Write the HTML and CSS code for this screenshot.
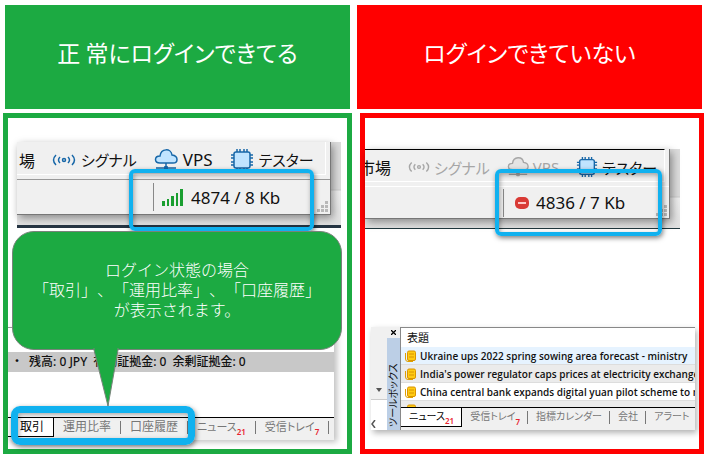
FILE: index.html
```html
<!DOCTYPE html>
<html lang="ja">
<head>
  <meta charset="UTF-8">
  <meta name="viewport" content="width=device-width, initial-scale=1.0">
  <title>ログイン状態の確認</title>
  <link rel="stylesheet" href="styles.css">
</head>
<body>
  <svg class="defs" aria-hidden="true">
    <symbol id="signal" viewBox="0 0 24 16">
      <path d="M4 3 Q-1 8 4 13 M8 5 Q5 8 8 11 M20 3 Q25 8 20 13 M16 5 Q19 8 16 11" fill="none" stroke="currentColor" stroke-width="1.500"/>
      <circle cx="12" cy="8" r="1.500" fill="none" stroke="currentColor" stroke-width="1.500"/>
    </symbol>
    <symbol id="cloud" viewBox="0 0 24 22">
      <path d="M6 14 C0 14 0 7 6 7 C7 -1 17 -1 18 6 C25 7 24 14 19 14 Z" fill="var(--fill)" stroke="currentColor" stroke-width="1.500"/>
      <path d="M12 14 V18 M2 19 H22" stroke="currentColor" stroke-width="1.500"/>
      <rect x="10" y="17" width="4" height="4" rx="1" fill="currentColor"/>
    </symbol>
    <symbol id="chip" viewBox="0 0 24 22">
      <path d="M7 0 V22 M10 0 V22 M14 0 V22 M17 0 V22 M1 6 H23 M1 9 H23 M1 13 H23 M1 16 H23" stroke="currentColor" stroke-width="1.500"/>
      <rect x="4" y="3" width="16" height="16" rx="2" fill="var(--fill)" stroke="currentColor" stroke-width="1.500"/>
    </symbol>
    <symbol id="news" viewBox="0 0 12 12">
      <path d="M1.500 3 V9 Q1.500 11.500 4 11.500 H9" fill="none" stroke="#e0a000"/>
      <rect x="3.500" y="1" width="8" height="9.500" rx="1.500" fill="#ffcb12" stroke="#d99400"/>
      <path d="M5 4 H10 M5 7 H10" stroke="#d99400"/>
    </symbol>
    <symbol id="grip" viewBox="0 0 12 12">
      <path d="M8 0h3v3h-3z M4 4h3v3h-3z M8 4h3v3h-3z M0 8h3v3h-3z M4 8h3v3h-3z M8 8h3v3h-3z" fill="#b8b8b8"/>
    </symbol>
  </svg>

  <main class="compare">
    <section class="column ok">
      <h1>正 常にログインできてる</h1>
      <div class="panel">
        <div class="shot">
          <div class="window">
            <div class="toolbar">
              <span class="market">場</span>
              <span class="tool"><svg class="icon"><use href="#signal"/></svg>シグナル</span>
              <span class="tool"><svg class="icon"><use href="#cloud"/></svg><span class="latin">VPS</span></span>
              <span class="tool"><svg class="icon"><use href="#chip"/></svg>テスター</span>
            </div>
            <div class="status">
              <div class="traffic">
                <svg class="i-bars" viewBox="0 0 22 18"><path d="M0 13h3v5h-3z M5 11h2v7h-2z M9 8h3v10h-3z M14 5h2v13h-2z M18 1h3v17h-3z" fill="#1a9e30"/></svg>
                <span>4874 / 8 Kb</span>
              </div>
              <svg class="grip"><use href="#grip"/></svg>
            </div>
          </div>
        </div>

        <div class="terminal">
          <div class="trade-head"></div>
          <div class="balance"><span>・</span><span>残高: 0 JPY</span><span>有効証拠金: 0</span><span>余剰証拠金: 0</span></div>
          <div class="trade-body"></div>
          <nav class="tabs">
            <a href="#" class="active">取引</a>
            <a href="#">運用比率</a>
            <a href="#">口座履歴</a>
            <a href="#" class="counted">ニュース<small>21</small></a>
            <a href="#" class="counted">受信トレイ<small>7</small></a>
          </nav>
        </div>

        <div class="mark mark-status"></div>
        <div class="callout">
          <p>ログイン状態の場合<br>「取引」、「運用比率」、「口座履歴」<br>が表示されます。</p>
          <svg class="tail" viewBox="0 0 26 60"><path d="M1 0 L1 2 L15 58 L25 2 L25 0" fill="#1caa42" stroke="#77837a"/></svg>
        </div>
        <div class="mark mark-tabs"></div>
      </div>
    </section>

    <section class="column ng">
      <h1>ログインできていない</h1>
      <div class="panel">
        <div class="shot">
          <div class="window">
            <div class="toolbar">
              <span class="market">市場</span>
              <span class="tool off"><svg class="icon"><use href="#signal"/></svg>シグナル</span>
              <span class="tool off"><svg class="icon"><use href="#cloud"/></svg>VPS</span>
              <span class="tool"><svg class="icon"><use href="#chip"/></svg>テスター</span>
            </div>
            <div class="status">
              <div class="traffic">
                <svg class="i-stop" viewBox="0 0 14 14"><rect y="1" width="14" height="12" rx="5" fill="#d93a35"/><rect x="3" y="6" width="8" height="2" fill="#ffc8c6"/></svg>
                <span>4836 / 7 Kb</span>
              </div>
              <svg class="grip"><use href="#grip"/></svg>
            </div>
          </div>
        </div>

        <div class="toolbox">
          <div class="scroll">
            <div class="scroll-top"><svg class="arrow" viewBox="0 0 8 5"><path d="M1 0h6L4 4z" fill="#555"/></svg></div>
            <div class="scroll-end"><svg class="chevron" viewBox="0 0 5 8"><path d="M4 0L1 4L4 8" fill="none" stroke="#555" stroke-width="1.500"/></svg></div>
          </div>
          <div class="side">
            <button type="button" aria-label="閉じる"><svg class="close" viewBox="0 0 6 6"><path d="M0 0L6 6M6 0L0 6" stroke="#000" stroke-width="1.500"/></svg></button>
            <div class="side-title">ツールボックス</div>
          </div>
          <div class="news">
            <table>
              <thead>
                <tr><th>表題</th></tr>
              </thead>
              <tbody>
                <tr><td><svg class="i-news"><use href="#news"/></svg>Ukraine ups 2022 spring sowing area forecast - ministry</td></tr>
                <tr><td><svg class="i-news"><use href="#news"/></svg>India's power regulator caps prices at electricity exchanges</td></tr>
                <tr><td><svg class="i-news"><use href="#news"/></svg>China central bank expands digital yuan pilot scheme to m</td></tr>
              </tbody>
            </table>
            <div class="next-row"><svg class="i-news"><use href="#news"/></svg></div>
            <nav class="tabs">
              <a href="#" class="active">ニュース<small>21</small></a>
              <a href="#">受信トレイ<small>7</small></a>
              <a href="#">指標カレンダー</a>
              <a href="#">会社</a>
              <a href="#">アラート</a>
            </nav>
          </div>
        </div>

        <div class="mark mark-status"></div>
      </div>
    </section>
  </main>
</body>
</html>
```

FILE: styles.css
```css
* {
  box-sizing: border-box;
}
body {
  margin: 0;
  padding: 5px 2px 2px 3px;
  background: #fff;
  color: #111;
  font-family: "Noto Sans", "Noto Sans CJK JP", sans-serif;
}
a {
  color: inherit;
  text-decoration: none;
}
svg {
  display: block;
  flex: none;
}
.defs {
  position: absolute;
  width: 0;
  height: 0;
}
.compare {
  display: grid;
  grid-template-columns: 1fr 1fr;
  gap: 3px;
}
.column {
  display: flex;
  flex-direction: column;
  min-width: 0;
}
.ok {
  --main: #1caa42;
}
.ng {
  --main: #ff0000;
}
h1 {
  display: flex;
  align-items: center;
  justify-content: center;
  height: 104px;
  margin: 0 2px 4px;
  padding-bottom: 10px;
  background: var(--main);
  color: #fff;
  font-family: "Noto Sans CJK JP", sans-serif;
  font-size: 23px;
  font-weight: 400;
  font-feature-settings: "palt";
}
.panel {
  position: relative;
  flex: 1;
  display: flex;
  flex-direction: column;
  min-height: 341px;
  border: 5px solid var(--main);
}
.ng .panel {
  margin-left: 5px;
}

/* status bar of the trading window */
.shot {
  margin: 24px 6px 0 9px;
  padding: 0 10px 10px 0;
  border-bottom: 3px solid #263543;
  background: linear-gradient(#dcdcdc 47px, #cccccc 48px, #eeeeee 49px, #e0e0e0);
}
.ng .shot {
  margin: 31px 19px 0 0;
  padding-bottom: 9px;
  border-bottom: 1px solid #20383e;
}
.window {
  background: #f0f0f0;
  border-right: 1px solid #777;
  border-bottom: 1px solid #777;
  box-shadow: 2px 3px 8px rgba(0, 0, 0, 0.4);
}
.toolbar {
  display: flex;
  align-items: center;
  gap: 17px;
  height: 33px;
  margin-right: 4px;
  padding: 3px 0 0 2px;
  border-right: 1px solid #fff;
  border-bottom: 1px solid #fff;
  font-size: 15px;
  font-feature-settings: "palt";
  white-space: nowrap;
}
.ng .toolbar {
  padding-left: 0;
  border-top: 1px solid #000;
}
.market {
  display: flex;
  justify-content: flex-end;
  width: 16px;
  font-size: 16px;
}
.ng .market {
  width: 26px;
  overflow: hidden;
}
.latin {
  font-size: 17px;
}
.tool {
  display: flex;
  align-items: center;
  gap: 5px;
}
.ng .tool {
  gap: 4px;
}
.tool svg {
  --fill: #c0e4ff;
  color: #1767a8;
}
.tool.off,
.tool.off svg {
  --fill: #e4e4e4;
  color: #a6a6a6;
}
.icon {
  width: 24px;
  height: 22px;
}
.ng .icon {
  width: 22px;
}
.status {
  display: flex;
  align-items: center;
  justify-content: flex-end;
  height: 35px;
  margin-top: 4px;
  border-top: 1px solid #999;
  font-size: 17px;
}
.ng .status {
  height: 32px;
  border-top-color: #fff;
}
.traffic {
  display: flex;
  align-items: center;
  gap: 7px;
  width: 164px;
  height: 28px;
  padding-left: 8px;
  border-left: 1px solid #888;
}
.ng .traffic {
  width: 153px;
  padding-left: 11px;
}
.i-bars {
  width: 22px;
  height: 18px;
}
.i-stop {
  width: 14px;
  height: 14px;
}
.grip {
  align-self: flex-end;
  width: 12px;
  height: 12px;
  margin: 0 1px 1px 0;
}

/* terminal */
.terminal {
  width: 326px;
  max-width: 100%;
  margin-top: 99px;
  border-top: 1px solid #999;
  box-shadow: 3px 2px 6px rgba(0, 0, 0, 0.25);
}
.trade-head {
  height: 24px;
}
.balance {
  display: flex;
  gap: 6px;
  height: 20px;
  padding-left: 3px;
  background: #c8c8c8;
  font-size: 12px;
  font-weight: 500;
  line-height: 20px;
  white-space: nowrap;
}
.trade-body {
  height: 45px;
}
.tabs {
  display: flex;
  height: 23px;
  background: #f0f0f0;
  border-top: 1px solid #000;
  color: #777;
  font-size: 12px;
  font-feature-settings: "palt";
  line-height: 17px;
  white-space: nowrap;
}
.tabs a {
  display: flex;
  height: 19px;
  padding: 0 9px;
}
.tabs a:not(.active)::after {
  content: "";
  width: 1px;
  height: 13px;
  margin: 3px -9px 0 9px;
  background: #777;
}
.tabs .active {
  padding-left: 12px;
  background: #fff;
  border-right: 1px solid #000;
  border-bottom: 1px solid #000;
  color: #000;
}
.tabs .counted {
  font-size: 11px;
}
.tabs small {
  align-self: flex-end;
  color: #e8222e;
  font-size: 8px;
  font-weight: 600;
  line-height: 10px;
}

/* toolbox */
.toolbox {
  display: flex;
  margin: 98px 4px 0 6px;
  background: #f0f0f0;
  box-shadow: 2px 3px 6px rgba(0, 0, 0, 0.3);
}
.scroll {
  display: flex;
  flex-direction: column;
  width: 16px;
}
.scroll-top {
  flex: 1;
  display: flex;
  align-items: flex-end;
  justify-content: center;
  padding-bottom: 6px;
  border-bottom: 1px solid #ccc;
}
.scroll-end {
  height: 30px;
  padding-top: 20px;
  background: #fff;
}
.arrow {
  width: 8px;
  height: 5px;
}
.chevron {
  width: 5px;
  height: 8px;
}
.side {
  display: flex;
  flex-direction: column;
  width: 13px;
}
.side button {
  display: flex;
  align-items: center;
  justify-content: center;
  height: 11px;
  padding: 0;
  border: 0;
  background: none;
}
.close {
  width: 5px;
  height: 5px;
}
.side-title {
  flex: 1;
  padding-top: 3px;
  background: #bccfe6;
  font-size: 10px;
  font-feature-settings: "palt", "vpal";
  line-height: 13px;
  writing-mode: vertical-rl;
  text-orientation: sideways;
  transform: rotate(180deg);
  white-space: nowrap;
}
.news {
  flex: 1;
  min-width: 0;
  border-top: 1px solid #888;
  border-left: 1px solid #888;
  background: #fff;
  overflow: hidden;
}
table {
  width: 100%;
  table-layout: fixed;
  border-collapse: collapse;
}
th {
  height: 19px;
  padding: 0 6px;
  font-size: 11px;
  font-weight: 400;
  line-height: 18px;
  text-align: left;
}
td {
  display: flex;
  align-items: center;
  gap: 4px;
  height: 18px;
  padding-left: 3px;
  border-bottom: 1px solid #ddd;
  font-family: "Open Sans", sans-serif;
  font-size: 10px;
  font-weight: 600;
  white-space: nowrap;
}
tbody tr:nth-child(1) {
  background: #e6f3ff;
}
tbody tr:nth-child(2) {
  background: #ebebeb;
}
.next-row {
  height: 6px;
  padding: 3px 0 0 3px;
  background: #ebebeb;
  overflow: hidden;
}
.i-news {
  width: 12px;
  height: 12px;
}
.news .tabs {
  font-size: 10px;
}
.news .tabs a {
  padding: 0 7px 0 8px;
}
.news .tabs a:not(.active)::after {
  margin-right: -7px;
  margin-left: 7px;
}

/* highlights */
.mark {
  position: absolute;
  border: 4px solid #10b1ef;
  border-radius: 6px;
  box-shadow: 1px 2px 5px rgba(0, 0, 0, 0.5), inset 1px 2px 5px rgba(0, 0, 0, 0.35);
}
.mark-status {
  top: 51px;
  left: 121px;
  width: 185px;
  height: 62px;
}
.ng .mark-status {
  left: 130px;
  width: 167px;
  height: 67px;
}
.mark-tabs {
  top: 288px;
  left: 3px;
  width: 184px;
  height: 39px;
  border-width: 7px;
  border-radius: 9px;
}
.callout {
  position: absolute;
  top: 113px;
  left: 4px;
  right: 5px;
  height: 119px;
  padding-top: 27px;
  background: #1caa42;
  border: 1px solid #77837a;
  border-radius: 22px;
  color: #fff;
  text-align: center;
}
.callout p {
  margin: 0;
  font-family: "Noto Sans CJK JP", sans-serif;
  font-size: 16px;
  font-weight: 300;
  line-height: 20px;
  text-spacing-trim: space-all;
  white-space: nowrap;
}
.tail {
  position: absolute;
  top: 116px;
  left: 80px;
  width: 26px;
  height: 60px;
}
```
